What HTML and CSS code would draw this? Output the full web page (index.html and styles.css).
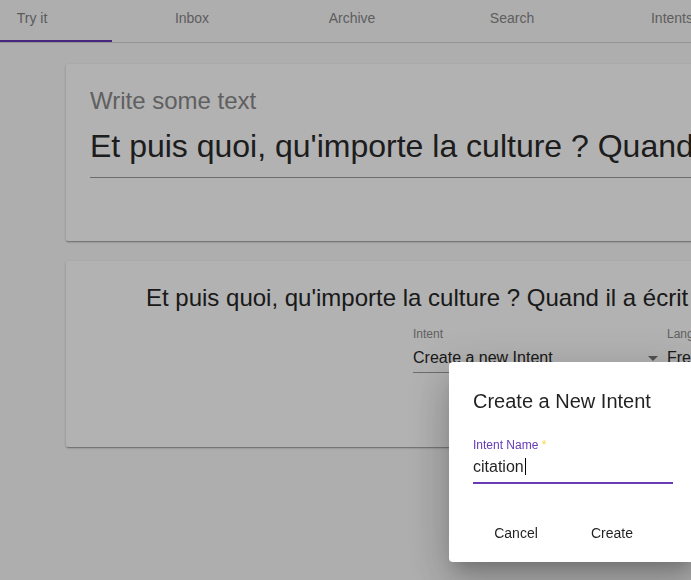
FILE: index.html
```
<!DOCTYPE html>
<html lang="en">
<head>
<meta charset="utf-8">
<title>Try it</title>
<link rel="stylesheet" href="styles.css">
</head>
<body>
<div class="app">
  <nav class="tabbar">
    <div class="tabs">
      <div class="tab selected">Try it</div>
      <div class="tab">Inbox</div>
      <div class="tab">Archive</div>
      <div class="tab">Search</div>
      <div class="tab">Intents</div>
      <div class="tab">Entities</div>
    </div>
  </nav>
  <main class="content">
    <section class="card card-input">
      <div class="input-label">Write some text</div>
      <div class="input-value">Et puis quoi, qu'importe la culture ? Quand il a écrit Hamlet, Shakespeare</div>
    </section>
    <section class="card card-result">
      <div class="sentence">Et puis quoi, qu'importe la culture ? Quand il a écrit Hamlet, Shakespeare avait-il lu Shakespeare ?</div>
      <div class="controls">
        <div class="select select-intent">
          <div class="select-label">Intent</div>
          <div class="select-value">
            <span>Create a new Intent</span>
            <svg class="arrow" width="24" height="24" viewBox="0 0 24 24"><path d="M7 10l5 5 5-5z"/></svg>
          </div>
        </div>
        <div class="select select-lang">
          <div class="select-label">Language</div>
          <div class="select-value"><span>French</span></div>
        </div>
      </div>
    </section>
  </main>
</div>
<div class="backdrop"></div>
<div class="dialog" role="dialog">
  <h2 class="dialog-title">Create a New Intent</h2>
  <div class="field">
    <div class="field-label">Intent Name <span class="asterisk">*</span></div>
    <div class="field-input">citation<span class="caret"></span></div>
  </div>
  <div class="actions">
    <button class="btn">Cancel</button>
    <button class="btn">Create</button>
  </div>
</div>
</body>
</html>
```
FILE: styles.css
```
html, body {
  margin: 0;
  padding: 0;
}
body {
  width: 691px;
  height: 580px;
  overflow: hidden;
  background: #fafafa;
  font-family: "Liberation Sans", Arial, sans-serif;
  color: rgba(0,0,0,0.87);
}
.app {
  width: 691px;
  height: 580px;
  overflow: hidden;
}
.tabbar {
  border-bottom: 1px solid #d4d4d4;
  height: 42px;
  overflow: hidden;
}
.tabs {
  display: flex;
  margin-left: -48px;
}
.tab {
  flex: 0 0 160px;
  height: 40px;
  line-height: 36px;
  text-align: center;
  font-size: 14px;
  color: #878787;
  border-bottom: 2px solid transparent;
}
.tab.selected {
  color: #828282;
  border-bottom-color: #673ab7;
}
.content {
  padding: 21px 0 0 66px;
  display: flex;
  flex-direction: column;
  gap: 20px;
}
.card {
  width: 720px;
  background: #fff;
  border-radius: 2px;
  box-shadow: 0 1px 3px rgba(0,0,0,0.2), 0 1px 1px rgba(0,0,0,0.14), 0 2px 1px -1px rgba(0,0,0,0.12);
  box-sizing: border-box;
}
.card-input {
  height: 177px;
  padding: 23px 0 0 24px;
}
.input-label {
  font-size: 24px;
  line-height: 28px;
  color: #8a8a8a;
  white-space: nowrap;
}
.input-value {
  margin-top: 12px;
  font-size: 32px;
  line-height: 38px;
  padding-bottom: 12px;
  border-bottom: 1px solid #9c9c9c;
  white-space: nowrap;
  overflow: hidden;
  color: #2a2a2a;
}
.card-result {
  height: 186px;
  padding: 23px 0 0 80px;
}
.sentence {
  font-size: 24px;
  line-height: 28px;
  white-space: nowrap;
  color: #262626;
}
.controls {
  display: flex;
  margin: 15px 0 0 267px;
  gap: 4px;
}
.select {
  flex-shrink: 0;
}
.select-intent {
  width: 250px;
}
.select-lang {
  width: 160px;
}
.select-label {
  font-size: 12px;
  line-height: 14px;
  color: #8a8a8a;
}
.select-value {
  margin-top: 7px;
  font-size: 16px;
  line-height: 19px;
  padding-bottom: 5px;
  border-bottom: 1px solid #9c9c9c;
  display: flex;
  align-items: center;
  justify-content: space-between;
  height: 19px;
  white-space: nowrap;
  color: #262626;
}
.arrow {
  fill: rgba(0,0,0,0.54);
  margin-right: -2px;
}
.backdrop {
  position: fixed;
  inset: 0;
  background: rgba(0,0,0,0.3);
}
.dialog {
  position: fixed;
  left: 449px;
  top: 362px;
  width: 248px;
  height: 200px;
  box-sizing: border-box;
  padding: 27px 24px 0 24px;
  background: #fff;
  border-radius: 4px;
  box-shadow: 0 11px 15px -7px rgba(0,0,0,0.2), 0 24px 38px 3px rgba(0,0,0,0.14), 0 9px 46px 8px rgba(0,0,0,0.12);
}
.dialog-title {
  margin: 0;
  font-size: 20px;
  line-height: 24px;
  font-weight: normal;
  color: rgba(0,0,0,0.87);
  white-space: nowrap;
}
.field {
  margin-top: 25px;
  width: 200px;
}
.field-label {
  font-size: 12px;
  line-height: 14px;
  color: #673ab7;
}
.asterisk {
  color: #ffd54f;
}
.field-input {
  margin-top: 5px;
  font-size: 16px;
  line-height: 19px;
  padding-bottom: 6px;
  border-bottom: 2px solid #673ab7;
  color: rgba(0,0,0,0.87);
  display: flex;
  align-items: center;
}
.caret {
  display: inline-block;
  width: 1px;
  height: 17px;
  background: #000;
  margin-left: 1px;
}
.actions {
  display: flex;
  gap: 8px;
  margin-top: 31px;
  margin-left: -1px;
}
.btn {
  width: 88px;
  height: 36px;
  border: 0;
  background: transparent;
  font-family: "Liberation Sans", Arial, sans-serif;
  font-size: 14px;
  color: rgba(0,0,0,0.87);
  padding: 0;
  border-radius: 2px;
}
```
